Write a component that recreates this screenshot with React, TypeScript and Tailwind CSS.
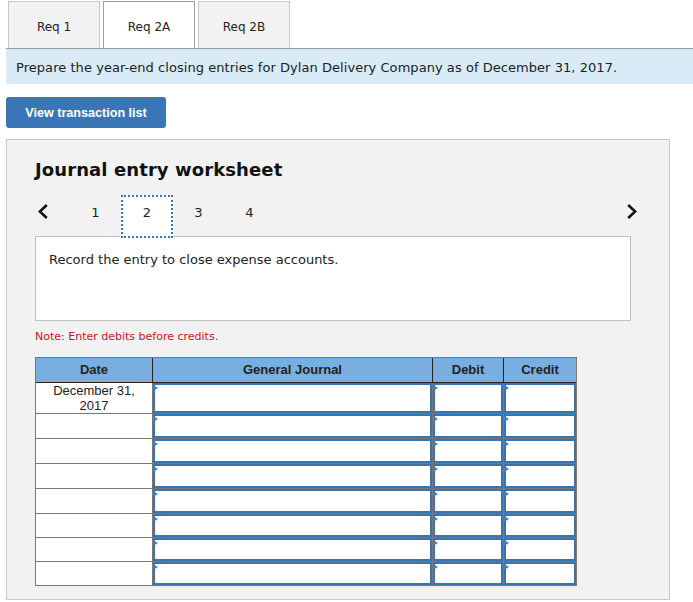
import React from "react";

const Tri = () => (
  <span className="absolute left-[-2px] top-[0px] w-0 h-0 border-y-[3.5px] border-y-transparent border-l-[5px] border-l-[#3a80c9]" />
);

const InputCell = ({ w, last }: { w: string; last?: boolean }) => (
  <div className={`${w} h-full ${last ? "" : "border-r border-[#777]"}`}>
    <div className="relative w-full h-full border-2 border-[#3b73ad] bg-white">
      <Tri />
    </div>
  </div>
);

const rows = [
  { h: "h-[31px]", date: true },
  { h: "h-[25px]" },
  { h: "h-[25px]" },
  { h: "h-[25px]" },
  { h: "h-[25px]" },
  { h: "h-[24px]" },
  { h: "h-[24px]" },
  { h: "h-[23px]", last: true },
];

export default function App() {
  return (
    <div className="w-[693px] h-[602px] bg-white overflow-hidden font-['DejaVu_Sans',sans-serif] text-[#222]">
      {/* Tabs */}
      <div className="flex gap-[3px] pl-[8px] pt-[1px]">
        <div className="w-[92px] h-[47px] flex items-center justify-center pt-[3px] border border-b-0 border-[#c8c8c8] bg-[#f2f2f2] text-[12px] text-[#222]">
          Req 1
        </div>
        <div className="w-[92px] h-[47px] flex items-center justify-center pt-[3px] border border-b-0 border-[#a0a0a0] bg-white text-[12px] text-[#222]">
          Req 2A
        </div>
        <div className="w-[92px] h-[47px] flex items-center justify-center pt-[3px] border border-b-0 border-[#c8c8c8] bg-[#f2f2f2] text-[12px] text-[#222]">
          Req 2B
        </div>
      </div>

      {/* Banner */}
      <div className="ml-[6px] h-[36px] border-t border-[#9a9a9a] bg-[#d9ebf7] flex items-center pl-[10px] pt-[3px] text-[13px] tracking-[0.05px] text-[#222]">
        Prepare the year-end closing entries for Dylan Delivery Company as of December 31, 2017.
      </div>

      {/* Button */}
      <div className="ml-[6px] mt-[13px] w-[160px] h-[31px] rounded-[3px] bg-[#3a76b6] flex items-center justify-center pt-[2px] text-white font-bold text-[12.6px] font-['Liberation_Sans',Arial,sans-serif]">
        View transaction list
      </div>

      {/* Panel */}
      <div className="ml-[6px] mt-[11px] w-[664px] h-[461px] border border-[#c8c8c8] bg-[#f2f2f2] pl-[28px] pr-[38px] pt-[20px]">
        <div className="h-[20px] leading-[20px] text-[18px] font-bold tracking-[0.1px] text-[#111]">
          Journal entry worksheet
        </div>

        {/* Nav */}
        <div className="mt-[15px] h-[41px] flex items-start mr-[-8px]">
          <div className="w-[35px] h-[41px] pl-[3px] pt-[9px]">
            <svg width="10" height="15" viewBox="0 0 10 15" className="block">
              <polyline points="8.8,1 1.8,7.5 8.8,14" fill="none" stroke="#111" strokeWidth="2.6" />
            </svg>
          </div>
          <div className="w-[51px] h-[41px] flex justify-center pt-[10px] text-[13px] leading-[15px] text-[#222]">1</div>
          <div className="relative z-10 w-[52px] h-[43px] flex justify-center pt-[8px] text-[13px] leading-[15px] text-[#222] bg-white border-2 border-dotted border-[#3a77b7]">
            2
          </div>
          <div className="w-[51px] h-[41px] flex justify-center pt-[10px] text-[13px] leading-[15px] text-[#222]">3</div>
          <div className="w-[51px] h-[41px] flex justify-center pt-[10px] text-[13px] leading-[15px] text-[#222]">4</div>
          <div className="ml-auto w-[12px] h-[41px] pt-[9px]">
            <svg width="10" height="15" viewBox="0 0 10 15" className="block">
              <polyline points="1.2,1 8.2,7.5 1.2,14" fill="none" stroke="#111" strokeWidth="2.6" />
            </svg>
          </div>
        </div>

        {/* Record box */}
        <div className="h-[85px] border border-[#c0c0c0] bg-white pl-[13px] pt-[15px] text-[13px] leading-[16px] text-[#222]">
          Record the entry to close expense accounts.
        </div>

        {/* Note */}
        <div className="mt-[8px] h-[14px] leading-[14px] text-[11px] text-[#c4161c] pt-[1px]">
          Note: Enter debits before credits.
        </div>

        {/* Table */}
        <div className="mt-[14px] w-[542px] border border-[#777] font-['Liberation_Sans',Arial,sans-serif] text-[#222]">
          <div className="flex h-[25px] bg-[#78aee0] border-b border-[#222] font-bold text-[13px]">
            <div className="w-[117px] border-r border-[#222] flex items-center justify-center">Date</div>
            <div className="w-[280px] border-r border-[#222] flex items-center justify-center">General Journal</div>
            <div className="w-[71px] border-r border-[#222] flex items-center justify-center">Debit</div>
            <div className="w-[72px] flex items-center justify-center">Credit</div>
          </div>
          {rows.map((r, i) => (
            <div key={i} className={`flex ${r.h} ${r.last ? "" : "border-b border-[#777]"}`}>
              <div className="w-[117px] h-full border-r border-[#777] bg-white text-center text-[13px] leading-[15px]">
                {r.date ? (
                  <>
                    December 31,
                    <br />
                    2017
                  </>
                ) : null}
              </div>
              <InputCell w="w-[280px]" />
              <InputCell w="w-[71px]" />
              <InputCell w="w-[72px]" last />
            </div>
          ))}
        </div>
      </div>
    </div>
  );
}
